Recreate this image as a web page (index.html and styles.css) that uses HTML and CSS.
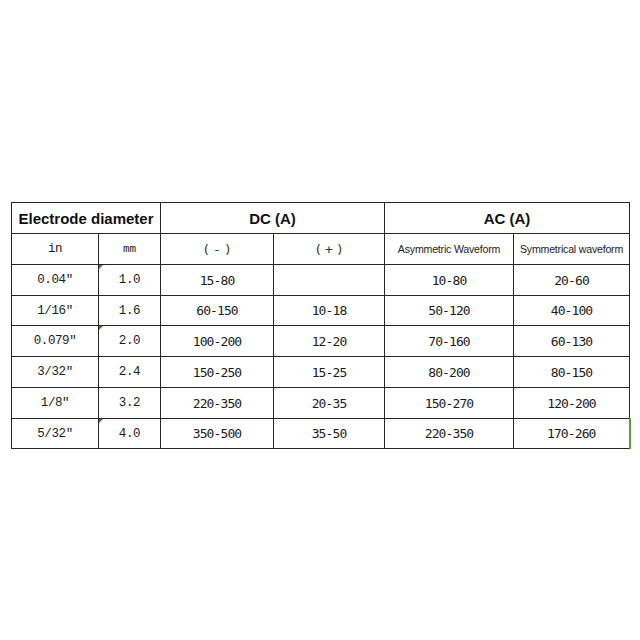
FILE: index.html
```html
<!DOCTYPE html>
<html>
<head>
<meta charset="utf-8">
<link rel="stylesheet" href="styles.css">
</head>
<body>
<div class="page">
<table class="spec">
  <colgroup>
    <col class="c-in"><col class="c-mm"><col class="c-dcn"><col class="c-dcp"><col class="c-asym"><col class="c-sym">
  </colgroup>
  <tr class="r-head">
    <th colspan="2" class="big">Electrode diameter</th>
    <th colspan="2" class="big">DC (A)</th>
    <th colspan="2" class="big">AC (A)</th>
  </tr>
  <tr class="r-sub">
    <td class="serif">in</td>
    <td class="serif small">mm</td>
    <td class="paren">(-)</td>
    <td class="paren">(+)</td>
    <td class="wave">Asymmetric Waveform</td>
    <td class="wave">Symmetrical waveform</td>
  </tr>
  <tr>
    <td class="serif">0.04″</td><td class="serif flag">1.0</td><td>15-80</td><td></td><td>10-80</td><td>20-60</td>
  </tr>
  <tr class="short">
    <td class="serif">1/16″</td><td class="serif">1.6</td><td>60-150</td><td>10-18</td><td>50-120</td><td>40-100</td>
  </tr>
  <tr>
    <td class="serif">0.079″</td><td class="serif flag">2.0</td><td>100-200</td><td>12-20</td><td>70-160</td><td>60-130</td>
  </tr>
  <tr>
    <td class="serif">3/32″</td><td class="serif">2.4</td><td>150-250</td><td>15-25</td><td>80-200</td><td>80-150</td>
  </tr>
  <tr>
    <td class="serif">1/8″</td><td class="serif">3.2</td><td>220-350</td><td>20-35</td><td>150-270</td><td>120-200</td>
  </tr>
  <tr class="short">
    <td class="serif">5/32″</td><td class="serif flag">4.0</td><td>350-500</td><td>35-50</td><td>220-350</td><td class="sel">170-260</td>
  </tr>
</table>
</div>
</body>
</html>
```
FILE: styles.css
```css
html, body {
  margin: 0;
  padding: 0;
  background: #ffffff;
}
.page {
  width: 640px;
  height: 640px;
  padding: 202px 0 0 11px;
  box-sizing: border-box;
}
.spec {
  border-collapse: collapse;
  table-layout: fixed;
  width: 618px;
  color: #1c1c1c;
  font-family: "DejaVu Sans Mono", monospace;
  font-size: 13px;
  letter-spacing: -0.9px;
}
.c-in { width: 87px; }
.c-mm { width: 62px; }
.c-dcn { width: 113px; }
.c-dcp { width: 111px; }
.c-asym { width: 129px; }
.c-sym { width: 116px; }
.spec th, .spec td {
  border: 1px solid #262626;
  padding: 0;
  text-align: center;
  vertical-align: middle;
  height: 30px;
  font-weight: normal;
}
.spec .short td {
  height: 29px;
}
.spec .big {
  font-family: "Liberation Sans", Arial, sans-serif;
  font-weight: bold;
  font-size: 15px;
  letter-spacing: 0;
  color: #111;
}
.spec .serif {
  font-family: "Liberation Mono", "Courier New", monospace;
  font-size: 12.5px;
  letter-spacing: -0.4px;
}
.spec .small {
  font-size: 11px;
  letter-spacing: 0;
}
.spec .paren {
  font-family: "DejaVu Sans Mono", monospace;
  font-size: 13px;
  letter-spacing: 3px;
  text-indent: 3px;
  color: #333;
}
.spec .wave {
  font-family: "Liberation Sans", Arial, sans-serif;
  font-size: 10.6px;
  letter-spacing: -0.2px;
  color: #222;
}
.spec .flag {
  position: relative;
}
.spec .flag::before {
  content: "";
  position: absolute;
  left: 0;
  top: 0;
  border-top: 4px solid #3f7f2a;
  border-right: 4px solid transparent;
}
.spec .sel {
  border-right: 2px solid #5fa03e;
}
```
